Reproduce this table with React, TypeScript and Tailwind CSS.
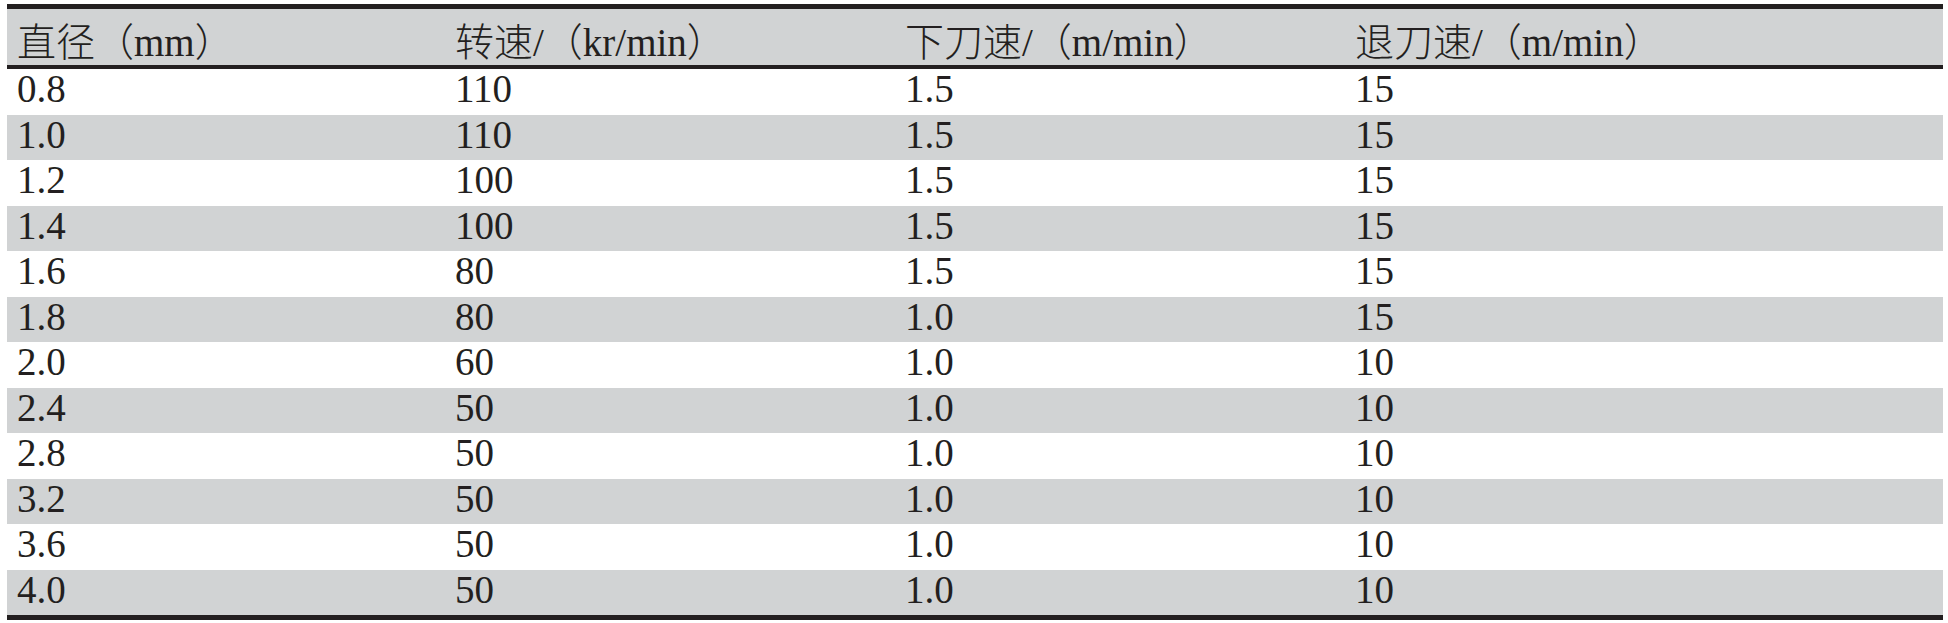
import React from "react";

const rows: [string, string, string, string][] = [
  ["0.8", "110", "1.5", "15"],
  ["1.0", "110", "1.5", "15"],
  ["1.2", "100", "1.5", "15"],
  ["1.4", "100", "1.5", "15"],
  ["1.6", "80", "1.5", "15"],
  ["1.8", "80", "1.0", "15"],
  ["2.0", "60", "1.0", "10"],
  ["2.4", "50", "1.0", "10"],
  ["2.8", "50", "1.0", "10"],
  ["3.2", "50", "1.0", "10"],
  ["3.6", "50", "1.0", "10"],
  ["4.0", "50", "1.0", "10"],
];

const headers: [string, string][] = [
  ["直径", "（mm）"],
  ["转速/", "（kr/min）"],
  ["下刀速/", "（m/min）"],
  ["退刀速/", "（m/min）"],
];

export default function App() {
  return (
    <div
      className="w-[1948px] h-[623px] bg-white pt-[4px] pl-[7px] text-[#231f20] text-[39px]"
      style={{ fontFamily: '"Liberation Serif", "Noto Sans CJK SC", serif' }}
    >
      <div className="w-[1936px] border-t-[5px] border-b-[5px] border-[#231f20]">
        <div className="grid grid-cols-[438px_450px_450px_1fr] h-[56px] bg-[#d1d3d4] border-b-[4px] border-[#231f20] box-content">
          {headers.map((h, i) => (
            <div key={i} className="pl-[10px] pt-[13px] leading-[42px] whitespace-nowrap">
              <span className="font-light">{h[0]}</span>
              <span className="font-light">{h[1]}</span>
            </div>
          ))}
        </div>
        {rows.map((r, ri) => (
          <div
            key={ri}
            className={
              "grid grid-cols-[438px_450px_450px_1fr] h-[45.5px] " +
              (ri % 2 === 1 ? "bg-[#d1d3d4]" : "bg-white")
            }
          >
            {r.map((c, ci) => (
              <div key={ci} className="pl-[10px] leading-[39px] whitespace-nowrap">
                {c}
              </div>
            ))}
          </div>
        ))}
      </div>
    </div>
  );
}
